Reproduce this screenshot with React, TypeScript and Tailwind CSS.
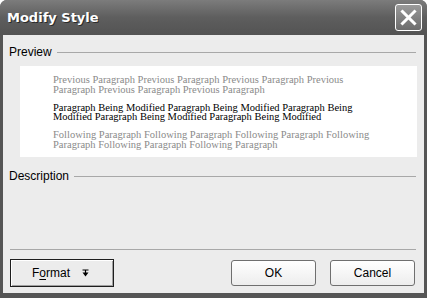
import React from "react";

const ui = { fontFamily: '"Liberation Sans", Arial, sans-serif' };
const serif = { fontFamily: '"Liberation Serif", "Times New Roman", serif' };

function SectionHeader({ label }: { label: string }) {
  return (
    <div className="flex items-center h-[16px] gap-[5px]">
      <span className="text-[12px] text-black leading-none">{label}</span>
      <div className="flex-1 h-px bg-[#a8a8a8]" />
    </div>
  );
}

function PushButton({ children }: { children: React.ReactNode }) {
  return (
    <div className="w-[85px] h-[26px] rounded-[3px] border border-[#6f6f6f] bg-gradient-to-b from-[#ffffff] to-[#ededed] flex items-center justify-center text-[12px] text-black">
      {children}
    </div>
  );
}

export default function App() {
  return (
    <div className="w-[427px] h-[298px] bg-[#555555] rounded-t-[7px] flex flex-col overflow-hidden" style={ui}>
      {/* title bar */}
      <div className="h-[35px] flex items-center justify-between pl-[7px] pr-[5px] bg-gradient-to-b from-[#7c7c7c] via-[#5e5e5e] to-[#535353]">
        <span
          className="text-white font-bold text-[13px]"
          style={{ fontFamily: '"DejaVu Sans", Verdana, sans-serif', textShadow: "1px 1px 0 #2a2a2a" }}
        >
          Modify Style
        </span>
        <div className="w-[27px] h-[27px] rounded-[3px] border border-white bg-gradient-to-b from-[#9a9a9a] to-[#6c6c6c] flex items-center justify-center">
          <svg width="17" height="17" viewBox="0 0 17 17">
            <path d="M2.5 2.5 L14.5 14.5 M14.5 2.5 L2.5 14.5" stroke="#ffffff" strokeWidth="3" strokeLinecap="square" />
          </svg>
        </div>
      </div>

      {/* body */}
      <div className="mx-[3px] mb-[5px] flex-1 bg-[#ececec] flex flex-col pl-[6px] pr-[8px]">
        <div className="mt-[9px]">
          <SectionHeader label="Preview" />
        </div>

        <div className="mt-[6px] ml-[11px] mr-[-1px] h-[91px] bg-white pt-[9px] pl-[33px] text-[10.5px] leading-[9.5px] whitespace-nowrap" style={serif}>
          <div className="text-[#8a8a8a]">
            Previous Paragraph Previous Paragraph Previous Paragraph Previous
            <br />
            Paragraph Previous Paragraph Previous Paragraph
          </div>
          <div className="text-black mt-[8.5px]">
            Paragraph Being Modified Paragraph Being Modified Paragraph Being
            <br />
            Modified Paragraph Being Modified Paragraph Being Modified
          </div>
          <div className="text-[#8a8a8a] mt-[8.5px]">
            Following Paragraph Following Paragraph Following Paragraph Following
            <br />
            Paragraph Following Paragraph Following Paragraph
          </div>
        </div>

        <div className="mt-[11px]">
          <SectionHeader label="Description" />
        </div>

        <div className="mt-[65px] ml-px h-px bg-[#a8a8a8]" />

        <div className="mt-[9px] ml-px flex items-center justify-between pr-px">
          <div className="w-[104px] h-[28px] border border-[#1e1e1e] bg-[#ececec] shadow-[inset_1px_1px_0_#ffffff,inset_-1px_-1px_0_#a0a0a0] flex items-center pl-[21px] text-[12px] text-black">
            <span>
              F<span className="underline underline-offset-2">o</span>rmat
            </span>
            <svg width="7" height="8" viewBox="0 0 7 8" className="ml-[12px]">
              <path d="M0.5 1 H6.5 M3.5 1 V4" stroke="#000" strokeWidth="1.2" />
              <path d="M0.5 3.5 H6.5 L3.5 7.5 Z" fill="#000" />
            </svg>
          </div>
          <div className="flex gap-[14px]">
            <PushButton>OK</PushButton>
            <PushButton>Cancel</PushButton>
          </div>
        </div>
      </div>
    </div>
  );
}
